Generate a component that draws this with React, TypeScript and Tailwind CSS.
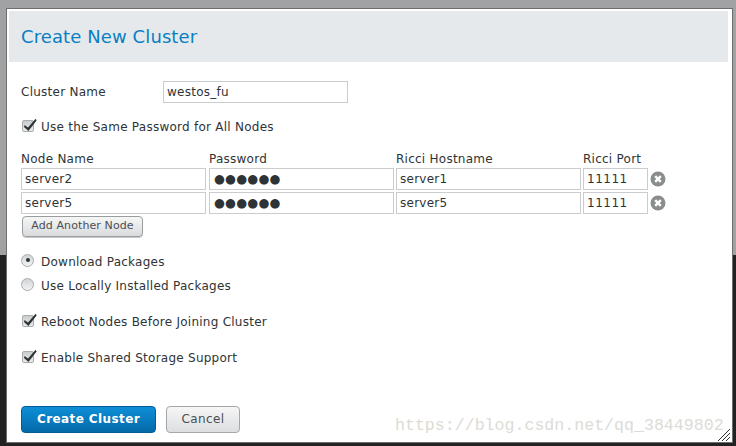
import React from "react";

const nodes = [
  { name: "server2", host: "server1", port: "11111" },
  { name: "server5", host: "server5", port: "11111" },
];

function CheckIcon() {
  return (
    <svg width="18" height="16" viewBox="0 0 18 16" className="block">
      <defs>
        <linearGradient id="cb" x1="0" y1="0" x2="0" y2="1">
          <stop offset="0" stopColor="#c8cacc" />
          <stop offset="1" stopColor="#eceded" />
        </linearGradient>
      </defs>
      <rect x="0.5" y="2.5" width="11" height="11" rx="1.5" fill="url(#cb)" stroke="#a9acae" />
      <path d="M2.6 7 L6 9.6 L13.6 0.8 L14.6 2.4 L6.4 13 L2 9 Z" fill="#2e3436" />
    </svg>
  );
}

function CheckRow({ label, className = "" }: { label: string; className?: string }) {
  return (
    <div className={`flex h-[18px] items-center ${className}`}>
      <div className="ml-[1px] w-[19px] -translate-y-[1px]">
        <CheckIcon />
      </div>
      <span>{label}</span>
    </div>
  );
}

function RadioRow({ label, checked, className = "" }: { label: string; checked?: boolean; className?: string }) {
  return (
    <div className={`flex h-[18px] items-center ${className}`}>
      <div className="flex h-[13px] w-[13px] -translate-y-[2px] items-center justify-center rounded-full border border-[#a9acae] bg-gradient-to-b from-[#d0d2d4] to-[#f4f4f4]">
        {checked && <div className="h-[4px] w-[4px] rounded-full bg-[#2e3436]" />}
      </div>
      <span className="ml-[7px]">{label}</span>
    </div>
  );
}

function Field({ value, className = "" }: { value: string; className?: string }) {
  return (
    <input
      readOnly
      value={value}
      className={`h-[22px] border border-[#c9cdd0] bg-white px-[3px] text-[#2e3436] outline-none ${className}`}
    />
  );
}

export default function App() {
  return (
    <div className="relative h-[446px] w-[736px] overflow-hidden font-['DejaVu_Sans',sans-serif] text-[12px] tracking-[0.25px] text-[#2e3436]">
      <div className="flex h-full flex-col">
        <div className="h-[255px] bg-[#a1a2a3]" />
        <div className="flex-1 bg-[#222222]" />
      </div>

      {/* modal */}
      <div className="absolute left-[6px] top-[8px] h-[435px] w-[727px] border border-[#6e6e6e] bg-white px-[2px] pt-[2px]">
        <div className="mr-[2px] flex h-[51px] items-center bg-[#e6e9ec] pl-[12px] text-[18px] font-medium tracking-[0.1px] text-[#0a7fc2]">
          Create New Cluster
        </div>

        <div className="pl-[12px]">
          <div className="mt-[19px] flex items-center">
            <label className="w-[142px]">Cluster Name</label>
            <Field value="westos_fu" className="w-[185px] text-[12px]" />
          </div>

          <CheckRow label="Use the Same Password for All Nodes" className="mt-[15px]" />

          <div className="mt-[16px] flex h-[16px] leading-[14px]">
            <div className="w-[188px]">Node Name</div>
            <div className="w-[187px]">Password</div>
            <div className="w-[187px]">Ricci Hostname</div>
            <div>Ricci Port</div>
          </div>

          {nodes.map((n) => (
            <div key={n.name} className="mb-[2px] flex items-center gap-x-[2px]">
              <Field value={n.name} className="mr-[1px] w-[185px] text-[12px]" />
              <Field value="●●●●●●" className="w-[185px] pb-[2px] pl-[4px] text-[12.5px] tracking-[0.2px]" />
              <Field value={n.host} className="w-[185px] text-[12px]" />
              <Field value={n.port} className="w-[65px] text-[12px] tracking-[0.5px]" />
              <svg width="16" height="16" viewBox="0 0 16 16">
                <circle cx="8" cy="8" r="7.5" fill="#8a8d8e" />
                <path d="M5.2 5.2 L10.8 10.8 M10.8 5.2 L5.2 10.8" stroke="#ffffff" strokeWidth="2.4" />
              </svg>
            </div>
          ))}

          <button className="ml-[1px] block h-[21px] w-[121px] rounded-[4px] border border-[#9a9c9e] bg-gradient-to-b from-[#f6f6f6] to-[#d9dbdd] text-[11px] tracking-[0.1px] text-[#4a4e50] shadow-[0_1px_0_#c9c9c9]">
            Add Another Node
          </button>

          <RadioRow checked label="Download Packages" className="mt-[16px]" />
          <RadioRow label="Use Locally Installed Packages" className="mt-[6px]" />
          <CheckRow label="Reboot Nodes Before Joining Cluster" className="mt-[18px]" />
          <CheckRow label="Enable Shared Storage Support" className="mt-[18px]" />

          <div className="mt-[39px] flex gap-x-[10px]">
            <button className="h-[27px] w-[135px] rounded-[4px] border border-[#045c96] bg-gradient-to-b from-[#0e8fd8] to-[#0569a8] pb-[2px] text-[12px] font-bold tracking-[0.4px] text-white">
              Create Cluster
            </button>
            <button className="h-[27px] w-[74px] rounded-[4px] border border-[#a5a7a8] bg-gradient-to-b from-[#f6f6f6] to-[#dcdee0] pb-[2px] text-[12px] tracking-[0.4px] text-[#4a4e50]">
              Cancel
            </button>
          </div>
        </div>

        {/* resize grip */}
        <svg width="12" height="12" viewBox="0 0 12 12" className="absolute bottom-[1px] right-[2px]">
          <path d="M0 12 L12 0 M4 12 L12 4 M8 12 L12 8" stroke="#2e3436" strokeWidth="1" />
        </svg>
      </div>

      {/* watermark */}
      <div className="absolute left-[395px] top-[416px] font-['Liberation_Mono',monospace] text-[16.6px] leading-[20px] tracking-normal text-[#dcdcd6]">
        https://blog.csdn.net/qq_38449802
      </div>
    </div>
  );
}
